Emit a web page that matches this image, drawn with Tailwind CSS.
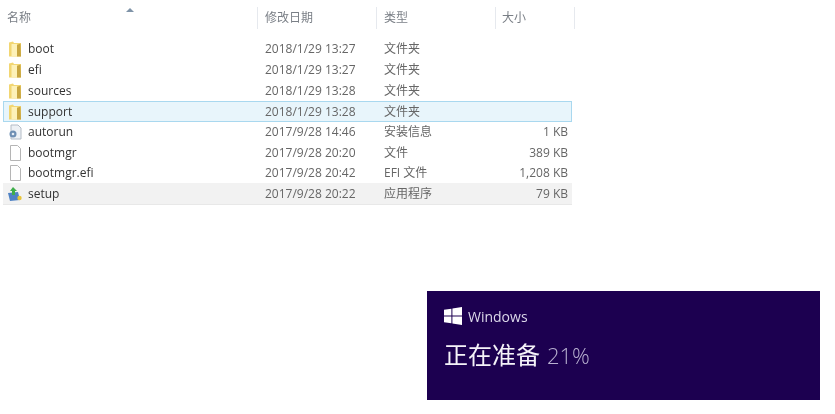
<!DOCTYPE html>
<html lang="zh-CN">
<head>
  <meta charset="UTF-8">
  <meta name="viewport" content="width=device-width, initial-scale=1">
  <title>Windows setup</title>
  <script src="https://cdn.jsdelivr.net/npm/@tailwindcss/browser@4"></script>
</head>
<body class="bg-white w-[835px] h-[414px] overflow-hidden font-['Open_Sans','Noto_Sans_CJK_SC',sans-serif] text-[12px] text-[#666]">

  <!-- shared folder icon -->
  <svg class="absolute w-0 h-0">
    <defs>
      <symbol id="folder" viewBox="0 0 14 16">
        <path d="M1 1.5 L5 .5 L6 2 L13 2 L13 15.5 L1 15.5 Z" fill="#f2d672"/>
        <path d="M3.5 3 H9 V15.5 H3.5 Z" fill="#fdf1b8"/>
        <path d="M9 4 L12.5 2.5 L13 15.5 L9 15.5 Z" fill="#c8a640"/>
      </symbol>
    </defs>
  </svg>

  <div class="blur-[0.5px]">
    <!-- Header -->
    <div class="relative grid grid-cols-[258px_119px_119px_79px] w-[575px] h-[22px] mt-[7px] text-[#7a7f86] leading-[22px]">
      <div class="border-r border-[#e6e9ee] pl-[7px]">名称</div>
      <div class="border-r border-[#e6e9ee] pl-[7px]">修改日期</div>
      <div class="border-r border-[#e6e9ee] pl-[7px]">类型</div>
      <div class="border-r border-[#e6e9ee] pl-[6px]">大小</div>
      <svg class="absolute left-[126px] top-0 w-[8px] h-[5px]" viewBox="0 0 8 5"><path d="M0 5 L4 1 L8 5 Z" fill="#7f93a8"/></svg>
    </div>

    <!-- Files -->
    <div class="ml-[3px] mt-[9px] w-[569px]">
      <div class="grid grid-cols-[255px_119px_119px_76px] h-[21px] items-center">
        <div class="flex items-center pl-[5px] gap-[6px] font-medium text-[#333]"><svg class="w-[14px] h-[16px]"><use href="#folder"/></svg>boot</div>
        <div class="pl-[7px]">2018/1/29 13:27</div><div class="pl-[7px]">文件夹</div><div></div>
      </div>
      <div class="grid grid-cols-[255px_119px_119px_76px] h-[21px] items-center">
        <div class="flex items-center pl-[5px] gap-[6px] font-medium text-[#333]"><svg class="w-[14px] h-[16px]"><use href="#folder"/></svg>efi</div>
        <div class="pl-[7px]">2018/1/29 13:27</div><div class="pl-[7px]">文件夹</div><div></div>
      </div>
      <div class="grid grid-cols-[255px_119px_119px_76px] h-[21px] items-center">
        <div class="flex items-center pl-[5px] gap-[6px] font-medium text-[#333]"><svg class="w-[14px] h-[16px]"><use href="#folder"/></svg>sources</div>
        <div class="pl-[7px]">2018/1/29 13:28</div><div class="pl-[7px]">文件夹</div><div></div>
      </div>
      <div class="grid grid-cols-[254px_119px_119px_75px] h-[21px] items-center bg-[#e8f5fb] border border-[#a9d8ef]">
        <div class="flex items-center pl-[4px] gap-[6px] font-medium text-[#333]"><svg class="w-[14px] h-[16px]"><use href="#folder"/></svg>support</div>
        <div class="pl-[7px]">2018/1/29 13:28</div><div class="pl-[7px]">文件夹</div><div></div>
      </div>
      <div class="grid grid-cols-[255px_119px_119px_76px] h-[20px] pb-[1px] items-center">
        <div class="flex items-center pl-[5px] gap-[6px] font-medium text-[#333]"><svg class="w-[14px] h-[16px]" viewBox="0 0 14 16"><path d="M3 1 H10 L13 4 V15 H3 Z" fill="#eef1f5" stroke="#b4bcc6"/><circle cx="5" cy="10" r="3.5" fill="#6f8fb3"/><circle cx="5" cy="10" r="1.3" fill="#e6edf5"/></svg>autorun</div>
        <div class="pl-[7px]">2017/9/28 14:46</div><div class="pl-[7px]">安装信息</div><div class="text-right pr-[4px]">1 KB</div>
      </div>
      <div class="grid grid-cols-[255px_119px_119px_76px] h-[21px] items-center">
        <div class="flex items-center pl-[5px] gap-[6px] font-medium text-[#333]"><svg class="w-[14px] h-[16px]" viewBox="0 0 14 16"><path d="M2.5 .5 H9.5 L12.5 3.5 V15.5 H2.5 Z" fill="#fff" stroke="#b5b5b5"/></svg>bootmgr</div>
        <div class="pl-[7px]">2017/9/28 20:20</div><div class="pl-[7px]">文件</div><div class="text-right pr-[4px]">389 KB</div>
      </div>
      <div class="grid grid-cols-[255px_119px_119px_76px] h-[20px] items-center">
        <div class="flex items-center pl-[5px] gap-[6px] font-medium text-[#333]"><svg class="w-[14px] h-[16px]" viewBox="0 0 14 16"><path d="M2.5 .5 H9.5 L12.5 3.5 V15.5 H2.5 Z" fill="#fff" stroke="#b5b5b5"/></svg>bootmgr.efi</div>
        <div class="pl-[7px]">2017/9/28 20:42</div><div class="pl-[7px]">EFI 文件</div><div class="text-right pr-[4px]">1,208 KB</div>
      </div>
      <div class="grid grid-cols-[255px_119px_119px_76px] h-[22px] pt-[1px] items-center bg-[#f2f2f2] border-b border-[#e8e8e8]">
        <div class="flex items-center pl-[5px] gap-[6px] font-medium text-[#333]"><svg class="w-[14px] h-[16px]" viewBox="0 0 14 16"><path d="M0 7 L10 6 L12 14 L2 15 Z" fill="#4f82c4"/><path d="M5 1 L9 5 L7 5 L7 9 L4 9 L4 5 L2 5 Z" fill="#3fae4a"/><circle cx="11.5" cy="12" r="2.2" fill="#e8c53a"/></svg>setup</div>
        <div class="pl-[7px]">2017/9/28 20:22</div><div class="pl-[7px]">应用程序</div><div class="text-right pr-[4px]">79 KB</div>
      </div>
    </div>

    <!-- Setup progress -->
    <div class="ml-[427px] mt-[86px] w-[393px] h-[109px] bg-[#1c0050] pl-[17px] pt-[15px] text-white">
      <div class="flex items-center gap-[6px] h-[20px]">
        <svg class="w-[18px] h-[18px]" viewBox="0 0 18 18"><path d="M0 2.8 L7.4 1.7 V8.5 H0 Z M8.4 1.6 L18 0 V8.5 H8.4 Z M0 9.5 H7.4 V16.3 L0 15.2 Z M8.4 9.5 H18 V18 L8.4 16.4 Z" fill="#fff"/></svg>
        <span class="text-[14px] text-[#dcd8ea]">Windows</span>
      </div>
      <div class="mt-[11px] flex items-baseline gap-[7px] leading-[36px]">
        <span class="text-[24px] text-[#f4f2f8]">正在准备</span>
        <span class="text-[22px] font-light text-[#b8b0d0]">21%</span>
      </div>
    </div>
  </div>

</body>
</html>
